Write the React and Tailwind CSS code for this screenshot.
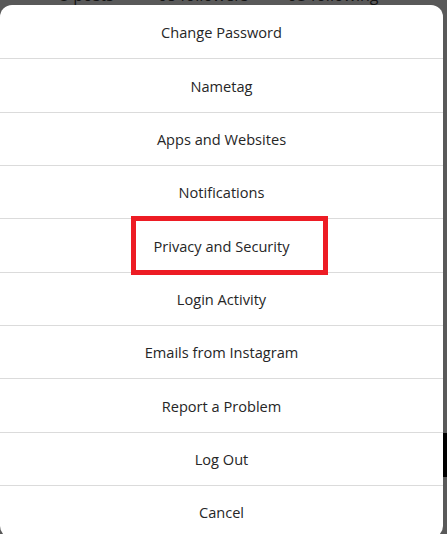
import React from 'react';

const items = [
  'Change Password',
  'Nametag',
  'Apps and Websites',
  'Notifications',
  'Privacy and Security',
  'Login Activity',
  'Emails from Instagram',
  'Report a Problem',
  'Log Out',
  'Cancel',
];

export default function App() {
  return (
    <div
      className="relative w-[447px] h-[534px] overflow-hidden bg-[#595959]"
      style={{ fontFamily: '"Open Sans", "Noto Sans", Arial, sans-serif' }}
    >
      {/* page behind the dimmed backdrop */}
      <div className="h-[5px] overflow-hidden">
        <div className="-mt-[14px] flex text-[16px] leading-[18px] text-[#141414]">
          <span className="ml-[60px]">5 posts</span>
          <span className="ml-[44px]">68 followers</span>
          <span className="ml-[40px]">93 following</span>
        </div>
      </div>

      <div className="flex">
        <div className="w-[443px] bg-white rounded-[12px] flex flex-col">
          {items.map((label, i) => (
            <button
              key={label}
              className={`h-[53.33px] pt-[2px] flex items-center justify-center text-[14.6px] text-[#262626] ${i > 0 ? 'border-t border-[#dbdbdb]' : ''}`}
            >
              {label}
            </button>
          ))}
        </div>
        <div className="flex-1 flex flex-col">
          <div className="h-[428px]" />
          <div className="h-[44px] bg-black" />
        </div>
      </div>

      {/* highlight annotation */}
      <div className="absolute left-[131px] top-[216px] w-[197px] h-[59px] border-[5px] border-[#ed1c24]" />
    </div>
  );
}
